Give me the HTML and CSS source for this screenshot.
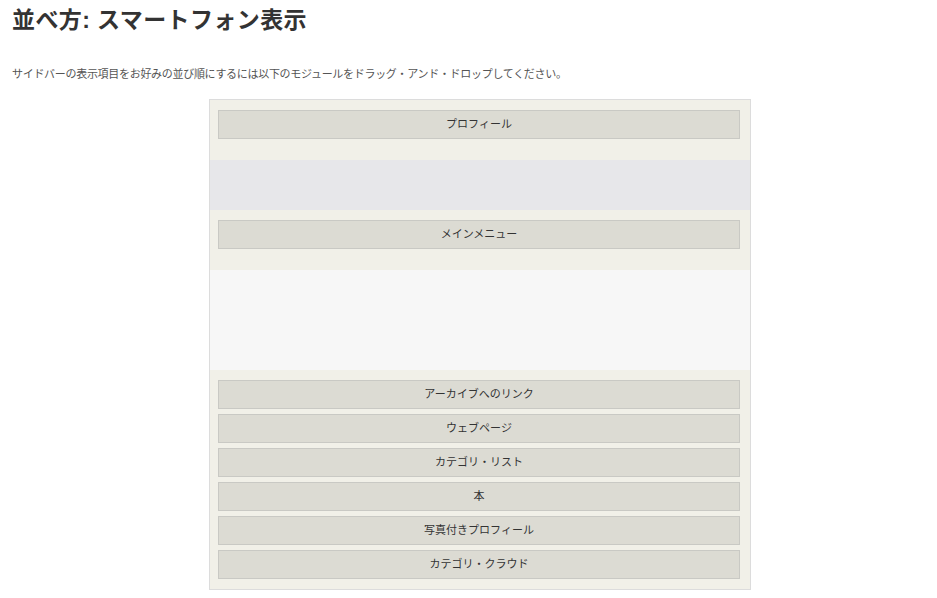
FILE: index.html
```html
<!DOCTYPE html>
<html lang="ja">
<head>
    <meta charset="UTF-8">
    <title>並べ方: スマートフォン表示</title>
    <link rel="stylesheet" href="styles.css">
</head>
<body>
    <div class="page">
        <h2>並べ方: スマートフォン表示</h2>
        <p class="lead">サイドバーの表示項目をお好みの並び順にするには以下のモジュールをドラッグ・アンド・ドロップしてください。</p>

        <div class="sorter">
            <!-- 上段 -->
            <ul class="zone zone-top">
                <li class="module">プロフィール</li>
            </ul>
            <div class="gap gap-grey"></div>

            <!-- メニュー -->
            <ul class="zone zone-top">
                <li class="module">メインメニュー</li>
            </ul>
            <div class="gap gap-light"></div>

            <!-- 下段 -->
            <ul class="zone zone-bottom">
                <li class="module">アーカイブへのリンク</li>
                <li class="module">ウェブページ</li>
                <li class="module">カテゴリ・リスト</li>
                <li class="module">本</li>
                <li class="module">写真付きプロフィール</li>
                <li class="module">カテゴリ・クラウド</li>
            </ul>
        </div>
    </div>
</body>
</html>
```

FILE: styles.css
```css
body {
    margin: 0;
    font-family: "Liberation Sans", "Noto Sans CJK JP", sans-serif;
    background-color: #fff;
    color: #333;
}

.page {
    padding: 0 12px;
}

h2 {
    margin: 0;
    padding-top: 6px;
    font-size: 23px;
    line-height: 28px;
    letter-spacing: 0.4px;
    font-weight: bold;
    color: #333;
}

.lead {
    margin: 32px 0 0;
    font-size: 11px;
    line-height: 16px;
    letter-spacing: -0.3px;
    color: #555;
}

.sorter {
    width: 540px;
    margin: 17px 0 0 197px;
    border: 1px solid #dcdcdc;
    background: #f1f0e8;
}

.zone {
    list-style: none;
    margin: 0;
    padding: 10px 10px 5px 8px;
    display: flex;
    flex-direction: column;
    gap: 5px;
}

.zone-top {
    min-height: 45px;
}

.zone-bottom {
    padding-bottom: 10px;
}

.module {
    height: 27px;
    line-height: 27px;
    border: 1px solid #c9c9c4;
    background: #dcdbd3;
    text-align: center;
    font-size: 11px;
    color: #333;
}

.gap {
    height: 50px;
}

.gap-grey {
    background: #e7e7ea;
}

.gap-light {
    height: 100px;
    background: #f7f7f7;
}
```
